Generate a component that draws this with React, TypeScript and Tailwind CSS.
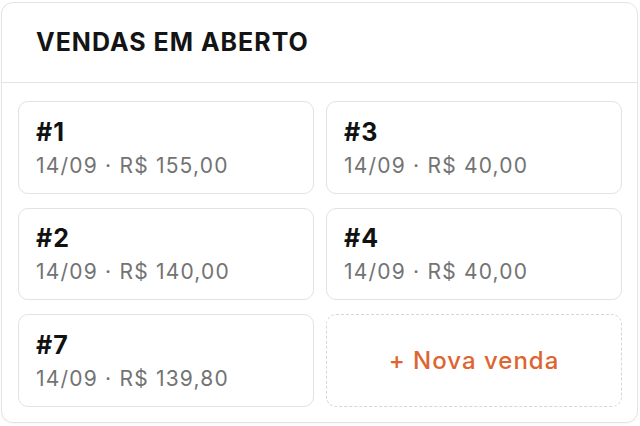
import React from 'react';

const sales = [
  { id: 1, date: '14/09', total: 'R$ 155,00' },
  { id: 3, date: '14/09', total: 'R$ 40,00' },
  { id: 2, date: '14/09', total: 'R$ 140,00' },
  { id: 4, date: '14/09', total: 'R$ 40,00' },
  { id: 7, date: '14/09', total: 'R$ 139,80' },
];

const App = () => {
  return (
    <div
      className="w-[640px] h-[426px] bg-white pt-[2px] pl-px pr-[2px] pb-[3px]"
      style={{ fontFamily: 'Inter, "Noto Sans", sans-serif' }}
    >
      <div className="h-full flex flex-col rounded-[12px] border border-[#e4e4e4] bg-white shadow-[0_1px_2px_rgba(0,0,0,0.04)]">
        <div className="h-[80px] shrink-0 flex items-center px-[34px] border-b border-[#e4e4e4]">
          <h2 className="text-[25px] font-bold tracking-[1px] text-[#141414]">VENDAS EM ABERTO</h2>
        </div>
        <div className="flex-1 grid grid-cols-2 grid-rows-3 gap-x-[12px] gap-y-[14px] pt-[18px] pb-[15px] pl-[16px] pr-[15px]">
          {sales.map((s) => (
            <div
              key={s.id}
              className="rounded-[10px] border border-[#e2e2e2] px-[17px] pt-[3px] flex flex-col justify-center"
            >
              <div className="text-[25px] font-bold leading-[33px] tracking-[1px] text-[#111]">#{s.id}</div>
              <div className="text-[21px] leading-[33px] tracking-[1.2px] text-[#737373]">
                {s.date} · {s.total}
              </div>
            </div>
          ))}
          <button className="rounded-[10px] border border-dashed border-[#d6d6d6] flex items-center justify-center text-[24px] font-medium tracking-[1px] text-[#dd6530]">
            + Nova venda
          </button>
        </div>
      </div>
    </div>
  );
};

export default App;
